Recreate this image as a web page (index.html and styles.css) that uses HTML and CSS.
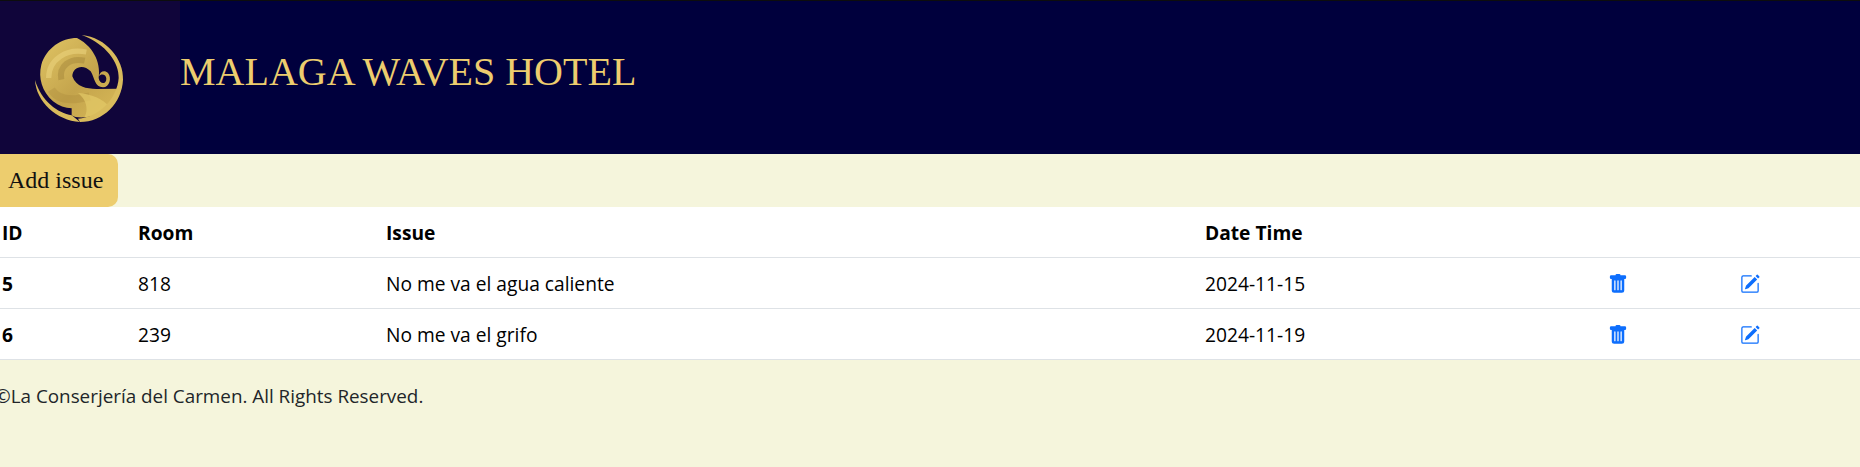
FILE: index.html
```html
<!DOCTYPE html>
<html>
<head>
<meta charset="utf-8">
<title>Malaga Waves Hotel</title>
<link rel="stylesheet" href="styles.css">
</head>
<body>
<header class="topbar">
    <div class="logo-box">
        <svg class="logo" viewBox="0 0 300 300" aria-hidden="true">
            <defs>
                <linearGradient id="gold" x1="0" y1="0" x2="1" y2="1">
                    <stop offset="0" stop-color="#e0c464"/>
                    <stop offset="0.55" stop-color="#c4a44c"/>
                    <stop offset="1" stop-color="#d8b958"/>
                </linearGradient>
                <clipPath id="bodyclip">
                    <path d="M147 30C100 30 55 60 40 110C30 150 42 190 75 220C92 234 112 241 131 241L131 262C150 276 215 268 245 235C258 220 266 200 270 182L205 183C175 182 145 178 133 145C133 118 165 105 188 130C200 150 200 178 225 178C245 178 252 150 240 135C230 125 215 130 213 145C220 135 235 140 235 152C235 170 215 170 212 150C218 115 205 60 147 30Z"/>
                </clipPath>
            </defs>
            <path fill="url(#gold)" d="M147 30C100 30 55 60 40 110C30 150 42 190 75 220C92 234 112 241 131 241L131 262C150 276 215 268 245 235C258 220 266 200 270 182L205 183C175 182 145 178 133 145C133 118 165 105 188 130C200 150 200 178 225 178C245 178 252 150 240 135C230 125 215 130 213 145C220 135 235 140 235 152C235 170 215 170 212 150C218 115 205 60 147 30Z"/>
            <g clip-path="url(#bodyclip)" fill="none">
                <path stroke="#ecd680" stroke-width="16" opacity="0.55" d="M62 150C62 95 115 60 175 72"/>
                <path stroke="#9c7e34" stroke-width="18" opacity="0.4" d="M100 155C92 115 125 88 170 98"/>
                <path stroke="#a58638" stroke-width="24" opacity="0.3" d="M70 185C95 225 150 215 185 205"/>
                <path fill="#e4ca68" opacity="0.7" d="M150 195C190 198 225 212 245 238C215 268 190 276 165 276C185 245 175 215 150 195Z"/>
            </g>
            <path fill="#d9bb5c" d="M161 21C235 28 288 95 285 155C282 225 225 282 156 282L150 272C215 268 268 210 272 150C274 105 235 48 161 21Z"/>
            <path fill="#d9bb5c" d="M21 156C24 220 85 278 156 282L131 262C90 255 40 220 21 156Z"/>
        </svg>
    </div>
    <h1 class="hotel-name">MALAGA WAVES HOTEL</h1>
</header>
<button class="add-btn">Add issue</button>
<table class="issues">
    <thead>
        <tr>
            <th class="col-id">ID</th>
            <th class="col-room">Room</th>
            <th class="col-issue">Issue</th>
            <th class="col-date">Date Time</th>
            <th class="col-del"></th>
            <th class="col-edit"></th>
        </tr>
    </thead>
    <tbody>
        <tr>
            <th>5</th>
            <td>818</td>
            <td>No me va el agua caliente</td>
            <td>2024-11-15</td>
            <td><svg class="icon" viewBox="0 0 16 16"><use href="#trash"/></svg></td>
            <td><svg class="icon" viewBox="0 0 16 16"><use href="#edit"/></svg></td>
        </tr>
        <tr>
            <th>6</th>
            <td>239</td>
            <td>No me va el grifo</td>
            <td>2024-11-19</td>
            <td><svg class="icon" viewBox="0 0 16 16"><use href="#trash"/></svg></td>
            <td><svg class="icon" viewBox="0 0 16 16"><use href="#edit"/></svg></td>
        </tr>
    </tbody>
</table>
<footer class="foot">©La Conserjería del Carmen. All Rights Reserved.</footer>
<svg class="sprites" aria-hidden="true">
    <symbol id="trash" viewBox="0 0 16 16">
        <path fill="currentColor" d="M2.5 1a1 1 0 0 0-1 1v1a1 1 0 0 0 1 1H3v9a2 2 0 0 0 2 2h6a2 2 0 0 0 2-2V4h.5a1 1 0 0 0 1-1V2a1 1 0 0 0-1-1H10a1 1 0 0 0-1-1H7a1 1 0 0 0-1 1H2.5zm3 4a.5.5 0 0 1 .5.5v7a.5.5 0 0 1-1 0v-7a.5.5 0 0 1 .5-.5zM8 5a.5.5 0 0 1 .5.5v7a.5.5 0 0 1-1 0v-7A.5.5 0 0 1 8 5zm3 .5v7a.5.5 0 0 1-1 0v-7a.5.5 0 0 1 1 0z"/>
    </symbol>
    <symbol id="edit" viewBox="0 0 16 16">
        <path fill="currentColor" d="M15.502 1.94a.5.5 0 0 1 0 .706L14.459 3.69l-2-2L13.502.646a.5.5 0 0 1 .707 0l1.293 1.293zm-1.75 2.456-2-2L4.939 9.21a.5.5 0 0 0-.121.196l-.805 2.414a.25.25 0 0 0 .316.316l2.414-.805a.5.5 0 0 0 .196-.12l6.813-6.814z"/>
        <path fill="currentColor" fill-rule="evenodd" d="M1 13.5A1.5 1.5 0 0 0 2.5 15h11a1.5 1.5 0 0 0 1.5-1.5v-6a.5.5 0 0 0-1 0v6a.5.5 0 0 1-.5.5h-11a.5.5 0 0 1-.5-.5v-11a.5.5 0 0 1 .5-.5H9a.5.5 0 0 0 0-1H2.5A1.5 1.5 0 0 0 1 2.5v11z"/>
    </symbol>
</svg>
</body>
</html>
```

FILE: styles.css
```css
* {
    box-sizing: border-box;
}

body {
    margin: 0;
    background: #f5f5dc;
    color: #212529;
    font-family: "Open Sans", "Noto Sans", sans-serif;
    font-size: 19px;
    line-height: 30px;
}

.topbar {
    display: flex;
    align-items: center;
    height: 154px;
    background: #00003d;
    border-top: 1px solid #0d0d0d;
}

.logo-box {
    display: flex;
    align-items: center;
    width: 180px;
    height: 100%;
    padding-left: 28px;
    background: #10053a;
}

.logo {
    width: 100px;
    height: 100px;
    filter: blur(0.4px);
}

.hotel-name {
    margin: 0 0 12px;
    color: #edcd6e;
    font-family: "Liberation Serif", serif;
    font-size: 40px;
    font-weight: normal;
    line-height: 1.2;
}

.add-btn {
    display: block;
    width: 118px;
    height: 53px;
    padding: 0 0 0 8px;
    background: #edcd6e;
    border: none;
    border-radius: 0 10px 10px 0;
    color: #111;
    font-family: "Liberation Serif", serif;
    font-size: 24px;
    text-align: left;
}

.issues {
    width: 100%;
    table-layout: fixed;
    border-collapse: separate;
    border-spacing: 0;
    background: #fff;
    color: #000;
    font-size: 19.2px;
}

.issues th,
.issues td {
    height: 51px;
    padding: 11px 2px 9px;
    border-bottom: 1px solid #dee2e6;
    text-align: left;
}

.col-id { width: 136px; }
.col-room { width: 248px; }
.col-issue { width: 819px; }
.col-date { width: 403px; }
.col-del { width: 132px; }

.icon {
    display: block;
    width: 20px;
    height: 20px;
    color: #0d6efd;
}

.foot {
    height: 108px;
    margin-left: -5px;
    padding-top: 21px;
    font-size: 18.85px;
}

.sprites {
    display: none;
}
```
